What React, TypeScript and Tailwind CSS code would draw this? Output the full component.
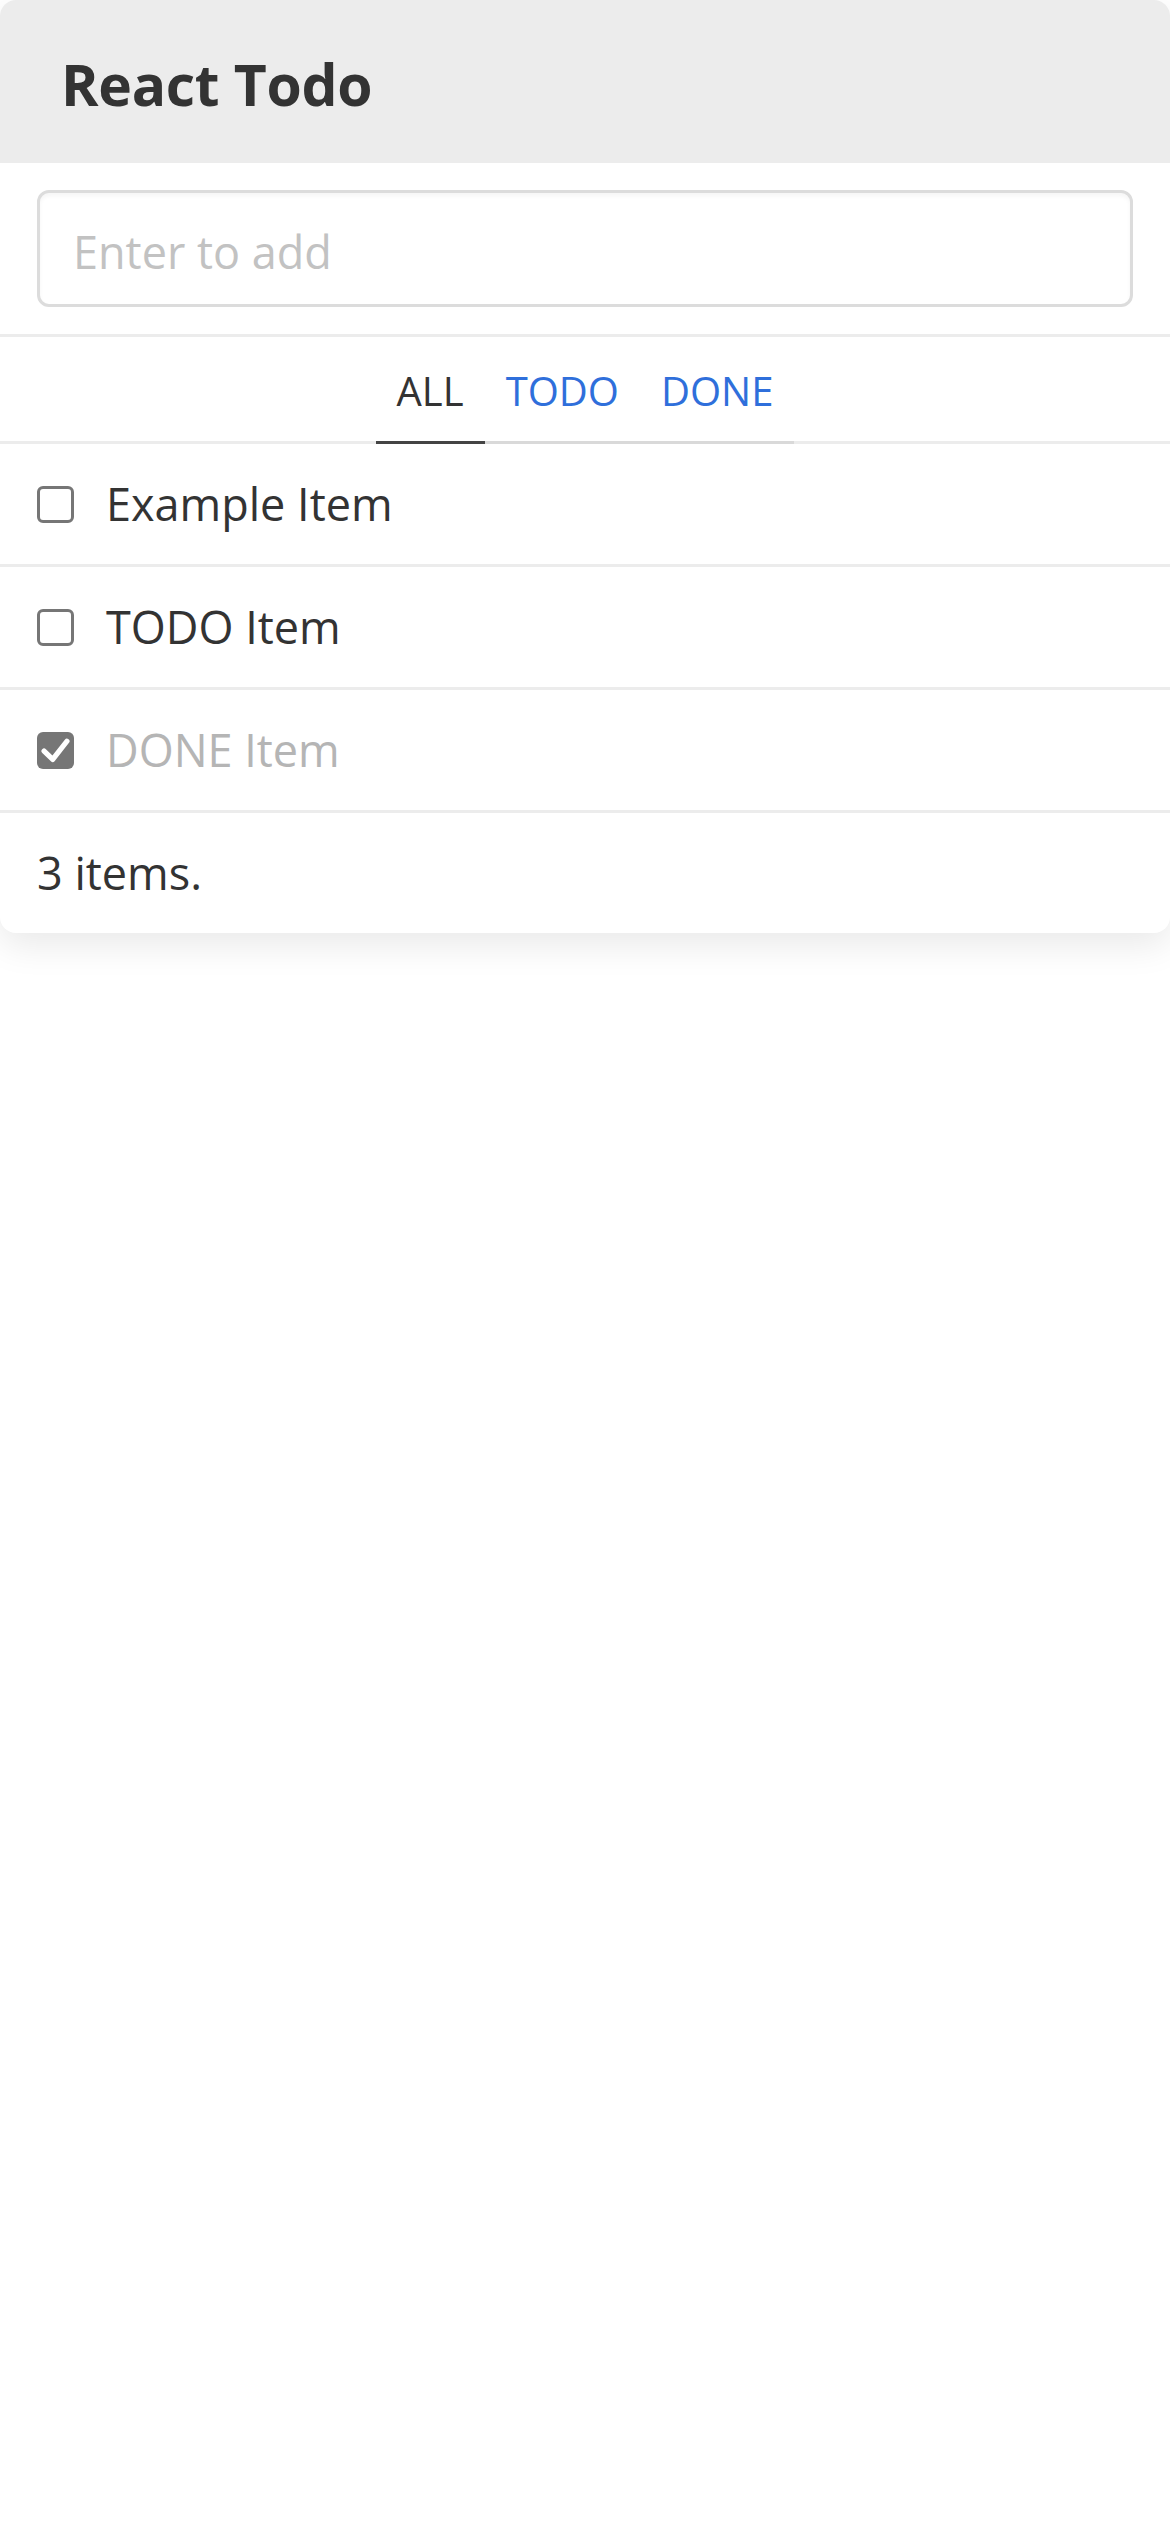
import { useState } from "react";

type Todo = { id: number; text: string; done: boolean };

const initialTodos: Todo[] = [
  { id: 1, text: "Example Item", done: false },
  { id: 2, text: "TODO Item", done: false },
  { id: 3, text: "DONE Item", done: true },
];

const tabs = ["ALL", "TODO", "DONE"] as const;
type Tab = (typeof tabs)[number];

function Checkbox({ checked, onChange }: { checked: boolean; onChange: () => void }) {
  return (
    <button
      onClick={onChange}
      aria-label="toggle"
      className={
        checked
          ? "w-[37px] h-[37px] shrink-0 rounded-[6px] bg-[#767676] flex items-center justify-center"
          : "w-[37px] h-[37px] shrink-0 rounded-[6px] border-[3px] border-[#767676] bg-white"
      }
    >
      {checked && (
        <svg viewBox="0 0 24 24" className="w-[37px] h-[37px]">
          <path d="M4.6 12.4l5.6 5.4L19.4 6" fill="none" stroke="#fff" strokeWidth="3.4" strokeLinecap="round" strokeLinejoin="round" />
        </svg>
      )}
    </button>
  );
}

export default function App() {
  const [todos, setTodos] = useState<Todo[]>(initialTodos);
  const [tab, setTab] = useState<Tab>("ALL");
  const [text, setText] = useState("");

  const visible = todos.filter((t) =>
    tab === "ALL" ? true : tab === "TODO" ? !t.done : t.done
  );

  function toggle(id: number) {
    setTodos((prev) => prev.map((t) => (t.id === id ? { ...t, done: !t.done } : t)));
  }

  function handleKeyDown(e: React.KeyboardEvent<HTMLInputElement>) {
    if (e.key === "Enter" && text.trim()) {
      setTodos((prev) => [...prev, { id: Date.now(), text: text.trim(), done: false }]);
      setText("");
    }
  }

  return (
    <div className="min-h-screen bg-white font-['Open_Sans',sans-serif] text-[#333]">
      <div className="rounded-[16px] bg-white shadow-[0_12px_36px_rgba(0,0,0,0.09)] overflow-hidden">
        {/* Header */}
        <div className="h-[163px] bg-[#ececec] flex items-center px-[61px] pt-[6px]">
          <h1 className="text-[57px] font-bold text-[#333] leading-none tracking-[-0.3px]">React Todo</h1>
        </div>

        {/* Input */}
        <div className="px-[37px] pt-[27px] pb-[27px] border-b-[3px] border-[#ececec]">
          <input
            value={text}
            onChange={(e) => setText(e.target.value)}
            onKeyDown={handleKeyDown}
            placeholder="Enter to add"
            className="w-full h-[117px] rounded-[12px] border-[3px] border-[#dcdcdc] shadow-[inset_0_3px_4px_rgba(0,0,0,0.04)] px-[33px] pt-[5px] text-[45px] outline-none placeholder-[#c2c2c2] text-[#333]"
          />
        </div>

        {/* Tabs */}
        <div className="flex justify-center border-b-[3px] border-[#ececec]">
          <div className="flex border-b-[3px] border-[#d9d9d9] -mb-[3px]">
            {tabs.map((t) => (
              <button
                key={t}
                onClick={() => setTab(t)}
                className={
                  t === tab
                    ? "h-[107px] px-[21px] -mb-[3px] border-b-[3px] border-[#444] text-[40px] text-[#333] pt-[3px]"
                    : "h-[107px] px-[21px] -mb-[3px] border-b-[3px] border-transparent text-[40px] text-[#2f6fdb] pt-[3px]"
                }
              >
                {t}
              </button>
            ))}
          </div>
        </div>

        {/* List */}
        {visible.map((t) => (
          <div
            key={t.id}
            className="h-[123px] flex items-center gap-[32px] px-[37px] border-b-[3px] border-[#ececec]"
          >
            <Checkbox checked={t.done} onChange={() => toggle(t.id)} />
            <span className={t.done ? "text-[45px] text-[#b5b5b5]" : "text-[45px] text-[#333]"}>{t.text}</span>
          </div>
        ))}

        {/* Footer */}
        <div className="h-[120px] flex items-center px-[37px]">
          <span className="text-[45px] text-[#333]">{todos.length} items.</span>
        </div>
      </div>
    </div>
  );
}
